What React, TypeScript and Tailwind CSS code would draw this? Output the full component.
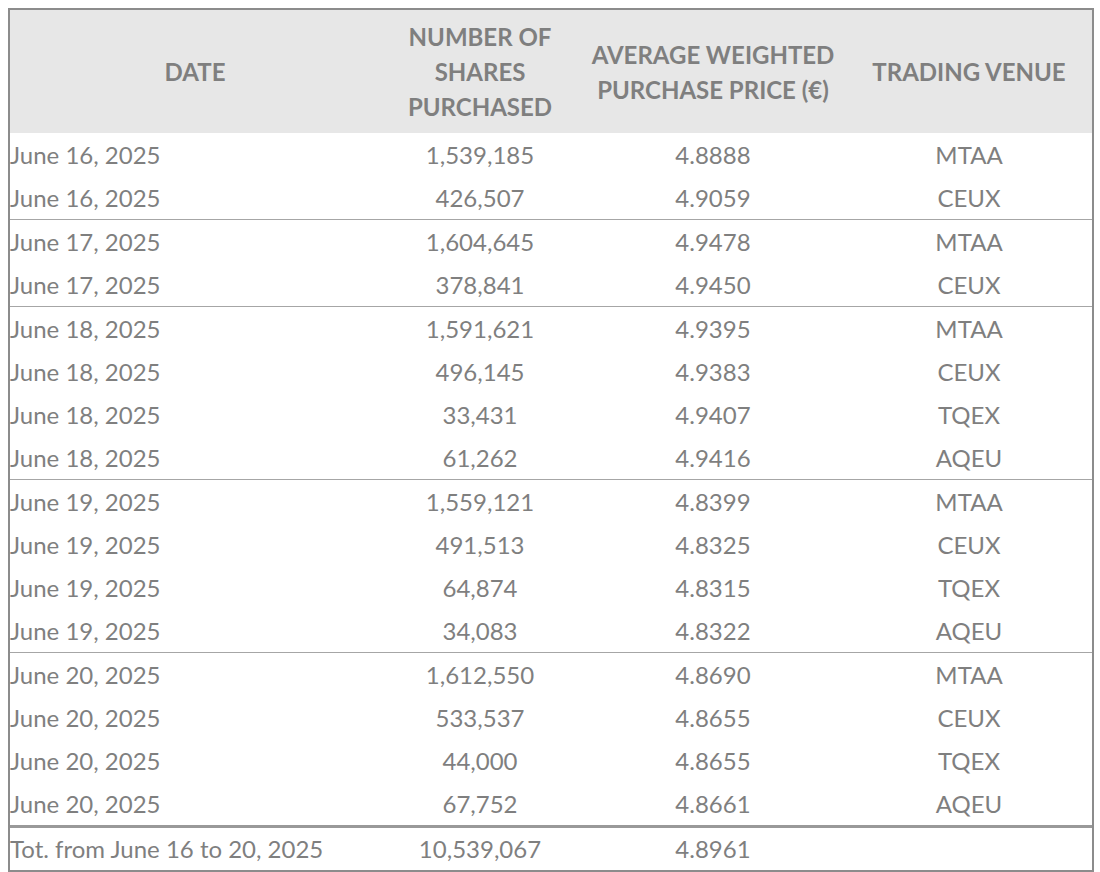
const groups: [string, string, string, string][][] = [
  [
    ["June 16, 2025", "1,539,185", "4.8888", "MTAA"],
    ["June 16, 2025", "426,507", "4.9059", "CEUX"],
  ],
  [
    ["June 17, 2025", "1,604,645", "4.9478", "MTAA"],
    ["June 17, 2025", "378,841", "4.9450", "CEUX"],
  ],
  [
    ["June 18, 2025", "1,591,621", "4.9395", "MTAA"],
    ["June 18, 2025", "496,145", "4.9383", "CEUX"],
    ["June 18, 2025", "33,431", "4.9407", "TQEX"],
    ["June 18, 2025", "61,262", "4.9416", "AQEU"],
  ],
  [
    ["June 19, 2025", "1,559,121", "4.8399", "MTAA"],
    ["June 19, 2025", "491,513", "4.8325", "CEUX"],
    ["June 19, 2025", "64,874", "4.8315", "TQEX"],
    ["June 19, 2025", "34,083", "4.8322", "AQEU"],
  ],
  [
    ["June 20, 2025", "1,612,550", "4.8690", "MTAA"],
    ["June 20, 2025", "533,537", "4.8655", "CEUX"],
    ["June 20, 2025", "44,000", "4.8655", "TQEX"],
    ["June 20, 2025", "67,752", "4.8661", "AQEU"],
  ],
];

const cols = "grid grid-cols-[370px_200px_266px_1fr] items-center";

function Row({ r }: { r: [string, string, string, string] }) {
  return (
    <div className={`${cols} h-[43px]`}>
      <div>{r[0]}</div>
      <div className="text-center">{r[1]}</div>
      <div className="text-center">{r[2]}</div>
      <div className="text-center">{r[3]}</div>
    </div>
  );
}

export default function App() {
  return (
    <div className="w-[1100px] h-[872px] bg-white pt-[8px] pl-[8px]" style={{ fontFamily: "Lato, 'Open Sans', sans-serif" }}>
      <div className="w-[1086px] border-2 border-[#8c8c8c] text-[24px] text-[#7f7f7f] leading-none">
        <div className={`${cols} h-[123px] bg-[#e7e7e7] font-bold`}>
          <div className="text-center">DATE</div>
          <div className="text-center leading-[35px]">NUMBER OF<br />SHARES<br />PURCHASED</div>
          <div className="text-center leading-[35px]">AVERAGE WEIGHTED<br />PURCHASE PRICE (€)</div>
          <div className="text-center">TRADING VENUE</div>
        </div>
        {groups.map((g, i) => (
          <div key={i} className={i === groups.length - 1 ? "border-b-[3px] border-[#999]" : "border-b border-[#a6a6a6]"}>
            {g.map((r, j) => (
              <Row key={j} r={r} />
            ))}
          </div>
        ))}
        <div className={`${cols} h-[42px]`}>
          <div>Tot. from June 16 to 20, 2025</div>
          <div className="text-center">10,539,067</div>
          <div className="text-center">4.8961</div>
          <div />
        </div>
      </div>
    </div>
  );
}
